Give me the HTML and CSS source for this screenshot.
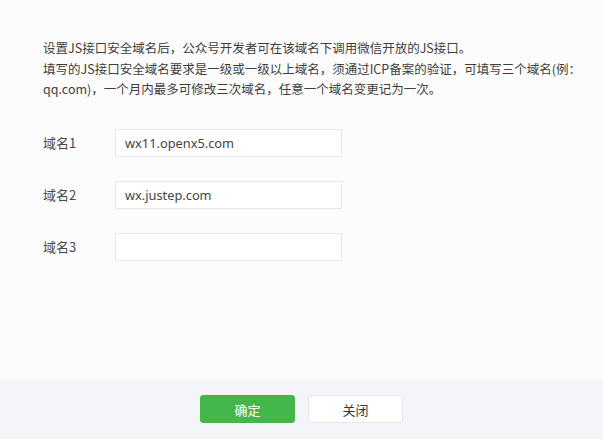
FILE: index.html
```html
<!DOCTYPE html>
<html lang="zh-CN">
<head>
<meta charset="utf-8">
<title>JS接口安全域名</title>
<link rel="stylesheet" href="styles.css">
</head>
<body>
<div class="dialog">
  <div class="dialog-body">
    <p class="desc">设置JS接口安全域名后，公众号开发者可在该域名下调用微信开放的JS接口。<br>填写的JS接口安全域名要求是一级或一级以上域名，须通过ICP备案的验证，可填写三个域名(例：<br>qq.com)，一个月内最多可修改三次域名，任意一个域名变更记为一次。</p>
    <div class="form">
      <div class="row">
        <label class="label">域名1</label>
        <input class="input" type="text" value="wx11.openx5.com">
      </div>
      <div class="row">
        <label class="label">域名2</label>
        <input class="input" type="text" value="wx.justep.com">
      </div>
      <div class="row">
        <label class="label">域名3</label>
        <input class="input" type="text" value="">
      </div>
    </div>
  </div>
  <div class="dialog-footer">
    <button class="btn btn-primary">确定</button>
    <button class="btn btn-default">关闭</button>
  </div>
</div>
</body>
</html>
```
FILE: styles.css
```css
html, body {
  margin: 0;
  padding: 0;
  height: 100%;
}
body {
  font-family: "Noto Sans CJK SC", "Noto Sans", sans-serif;
  color: #3e3e3e;
  background: #fcfcfc;
}
.dialog {
  display: flex;
  flex-direction: column;
  height: 439px;
}
.dialog-body {
  flex: 1;
  padding: 38px 20px 0 43px;
  background: #fcfcfc;
}
.desc {
  margin: 0;
  font-size: 12.5px;
  line-height: 20.5px;
  color: #3e3e3e;
}
.form {
  margin-top: 29px;
  display: flex;
  flex-direction: column;
  gap: 24px;
}
.row {
  display: flex;
  align-items: center;
}
.label {
  width: 72px;
  font-size: 13px;
  color: #4a4a4a;
}
.input {
  box-sizing: border-box;
  width: 227px;
  height: 28px;
  border: 1px solid #e7e7eb;
  background: #fff;
  padding: 0 9px;
  font-family: "Noto Sans", "Noto Sans CJK SC", sans-serif;
  font-size: 12.8px;
  color: #444;
  outline: none;
}
.dialog-footer {
  height: 60px;
  background: #f4f5f9;
  display: flex;
  justify-content: center;
  align-items: center;
  gap: 13px;
}
.btn {
  box-sizing: border-box;
  width: 95px;
  height: 28px;
  border-radius: 3px;
  font-family: "Noto Sans CJK SC", sans-serif;
  font-size: 13px;
  cursor: pointer;
}
.btn-primary {
  background: #44b549;
  border: 1px solid #44b549;
  color: #fff;
}
.btn-default {
  background: #fff;
  border: 1px solid #e4e8eb;
  color: #353535;
}
```
